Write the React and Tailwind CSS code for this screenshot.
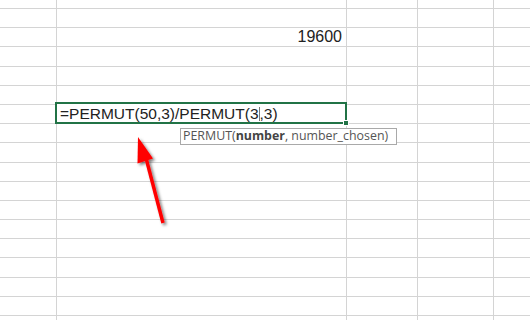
import React from "react";

const rowHeights = [9, 19, 19, 20, 19, 19, 19, 19, 20, 19, 19, 19, 19, 19, 20, 19, 19, 19];
const colWidths = ["w-[57px]", "w-[290px]", "w-[71px]", "w-[76px]", "flex-1"];

function Row({ h, children }) {
  return (
    <div className="flex border-b border-[#d4d4d4]" style={{ height: h }}>
      {children}
    </div>
  );
}

function Cell({ i, children, className = "" }) {
  return (
    <div className={`${colWidths[i]} shrink-0 ${i < 4 ? "border-r border-[#d4d4d4]" : ""} relative ${className}`}>
      {children}
    </div>
  );
}

export default function App() {
  return (
    <div className="relative w-[530px] h-[320px] overflow-hidden bg-white" style={{ fontFamily: '"Liberation Sans", Arial, sans-serif' }}>
      {rowHeights.map((h, r) => (
        <Row key={r} h={h}>
          <Cell i={0} />
          <Cell i={1} className={r === 2 ? "flex items-center justify-end pr-[4px]" : ""}>
            {r === 2 && <span className="text-[16px] leading-[18px] text-[#222]">19600</span>}
            {r === 6 && (
              <div className="absolute left-[-2px] top-[-3px] w-[292px] h-[22px] border-2 border-[#217346] bg-white z-10">
                <div className="pl-[3px] text-[15.5px] leading-[19px] text-[#222] whitespace-nowrap">
                  =PERMUT(50,3)/PERMUT(3
                  <span className="inline-block w-0 h-[14px] border-l border-[#777] align-[-2px]" />
                  ,3)
                </div>
                <div className="absolute right-[-4px] bottom-[-4px] w-[6px] h-[6px] bg-[#217346] border border-white" />
                <div
                  className="absolute left-[123px] top-[24px] w-[217px] h-[17px] border border-[#a9a9a9] bg-white flex items-center pl-[2px] text-[12.4px] text-[#555] whitespace-nowrap"
                  style={{ fontFamily: '"Open Sans", "Noto Sans", sans-serif' }}
                >
                  PERMUT(<span className="font-bold text-[#444]">number</span>, number_chosen)
                </div>
              </div>
            )}
          </Cell>
          <Cell i={2} />
          <Cell i={3} />
          <Cell i={4} />
        </Row>
      ))}
      <svg className="absolute left-0 top-0 pointer-events-none z-20" width="530" height="320" viewBox="0 0 530 320">
        <defs>
          <filter id="sh" x="-50%" y="-50%" width="200%" height="200%">
            <feDropShadow dx="2" dy="2" stdDeviation="1.8" floodColor="#000" floodOpacity="0.5" />
          </filter>
        </defs>
        <g filter="url(#sh)">
          <line x1="163" y1="223" x2="146" y2="158" stroke="#ff0000" strokeWidth="3.5" />
          <polygon points="138,137 153,158.5 137.5,163.5" fill="#ff0000" />
        </g>
      </svg>
    </div>
  );
}
